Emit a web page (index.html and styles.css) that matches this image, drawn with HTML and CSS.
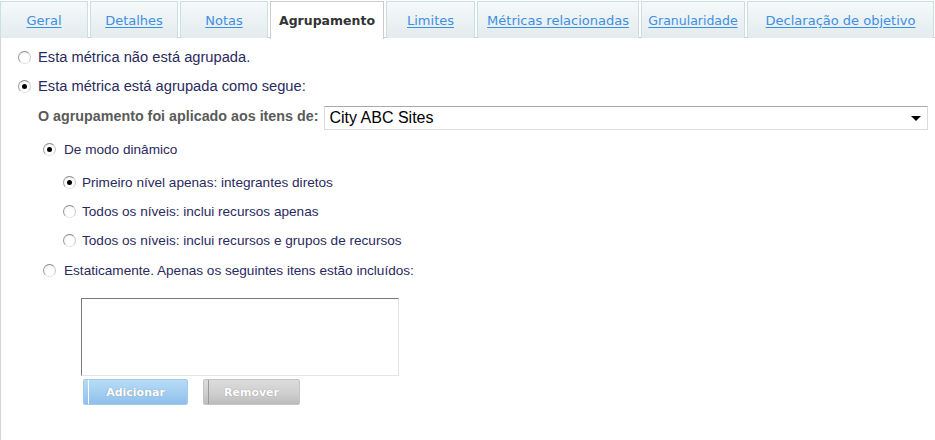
FILE: index.html
```html
<!DOCTYPE html>
<html lang="pt">
<head>
<meta charset="utf-8">
<link rel="stylesheet" href="styles.css">
</head>
<body>
<div class="page">
  <nav class="tabs">
    <a class="tab t-geral">Geral</a>
    <a class="tab t-det">Detalhes</a>
    <a class="tab t-notas">Notas</a>
    <span class="tab active t-agr">Agrupamento</span>
    <a class="tab t-lim">Limites</a>
    <a class="tab t-met">Métricas relacionadas</a>
    <a class="tab t-gran">Granularidade</a>
    <a class="tab last">Declaração de objetivo</a>
  </nav>
  <div class="panel">
    <label class="row top r1"><span class="radio"></span><span class="txt">Esta métrica não está agrupada.</span></label>
    <label class="row top r2"><span class="radio on"></span><span class="txt">Esta métrica está agrupada como segue:</span></label>
    <div class="applied">
      <span class="applied-label">O agrupamento foi aplicado aos itens de:</span>
      <div class="select"><span>City ABC Sites</span><span class="arrow"></span></div>
    </div>
    <label class="row lvl1 dyn"><span class="radio on"></span><span class="txt">De modo dinâmico</span></label>
    <label class="row lvl2 sub1"><span class="radio on"></span><span class="txt">Primeiro nível apenas: integrantes diretos</span></label>
    <label class="row lvl2 sub"><span class="radio"></span><span class="txt">Todos os níveis: inclui recursos apenas</span></label>
    <label class="row lvl2 sub"><span class="radio"></span><span class="txt">Todos os níveis: inclui recursos e grupos de recursos</span></label>
    <label class="row lvl1 stat"><span class="radio"></span><span class="txt">Estaticamente. Apenas os seguintes itens estão incluídos:</span></label>
    <div class="listbox"></div>
    <div class="buttons">
      <button class="btn add">Adicionar</button>
      <button class="btn remove">Remover</button>
    </div>
  </div>
</div>
</body>
</html>
```

FILE: styles.css
```css
* { box-sizing: border-box; }
html, body { margin: 0; padding: 0; background: #fff; }
body { width: 935px; height: 440px; overflow: hidden; font-family: "Liberation Sans", Arial, sans-serif; }
.page { display: flex; flex-direction: column; height: 440px; }

.tabs {
  display: flex;
  gap: 2px;
  padding: 1px 1px 0 0;
  height: 38px;
  border-bottom: 1px solid #cccccc;
}
.tab {
  width: 88px;
  flex: none;
  height: 37px;
  padding: 0 4px;
  display: flex;
  align-items: center;
  justify-content: center;
  border: 1px solid #cadfe0;
  border-bottom: none;
  background: linear-gradient(#f5f9fa, #e3ebee);
  font-family: "DejaVu Sans", Verdana, sans-serif;
  font-size: 13px;
  color: #3d8fe3;
  text-decoration: underline;
  text-underline-offset: 2px;
  white-space: nowrap;
}
.t-agr { width: 114px; }
.t-lim { width: 89px; }
.t-met { width: 162px; }
.t-gran { width: 104px; font-size: 12.5px; }
.tab.last { flex: 1; }
.tab.active {
  background: #fff;
  color: #333;
  font-weight: bold;
  font-size: 12.5px;
  text-decoration: none;
  height: 38px;
  border-color: #cccccc;
  position: relative;
  z-index: 1;
}

.panel {
  flex: 1;
  border-left: 1px solid #d4d4d4;
  display: flex;
  flex-direction: column;
  padding-top: 9px;
  font-size: 13.6px;
  color: #2a2a5e;
}
.row {
  display: flex;
  align-items: center;
  height: 20px;
}
.top { font-size: 14.7px; }
.r1 { padding-left: 17px; }
.r2 { padding-left: 17px; margin-top: 9px; }
.txt { margin-left: 7px; }
.lvl1 { padding-left: 42px; }
.lvl1 .txt { margin-left: 8px; }
.lvl2 { padding-left: 62px; }
.lvl2 .txt { margin-left: 6px; }
.dyn { margin-top: 9px; }
.sub1 { margin-top: 13px; }
.sub { margin-top: 9px; }
.stat { margin-top: 10px; }

.radio {
  width: 13px;
  height: 13px;
  border-radius: 50%;
  border: 1px solid;
  border-color: #8a8a8a #c8c8c8 #e2e2e2 #9a9a9a;
  background: radial-gradient(circle at 60% 65%, #ffffff 40%, #eeeeee 100%);
  display: flex;
  align-items: center;
  justify-content: center;
  flex: none;
}
.radio.on::after {
  content: "";
  width: 5px;
  height: 5px;
  border-radius: 50%;
  background: #000;
}

.applied {
  display: flex;
  align-items: center;
  margin-top: 10px;
  padding-left: 37px;
  padding-right: 7px;
  height: 24px;
}
.applied-label {
  font-weight: bold;
  color: #5a5a5a;
  font-size: 14.3px;
  margin-top: -4px;
  white-space: nowrap;
}
.select {
  margin-left: 6px;
  flex: 1;
  height: 24px;
  border: 1px solid #dcdcdc;
  border-top-color: #a8a8a8;
  display: flex;
  align-items: center;
  justify-content: space-between;
  padding: 0 6px 0 4px;
  font-size: 16px;
  color: #000;
}
.arrow {
  width: 0;
  height: 0;
  border-left: 5px solid transparent;
  border-right: 5px solid transparent;
  border-top: 5px solid #000;
}

.listbox {
  margin: 18px 0 0 80px;
  width: 318px;
  height: 78px;
  border: 1px solid;
  border-color: #7a7a7a #e4e4e4 #e4e4e4 #7a7a7a;
}
.buttons {
  display: flex;
  gap: 15px;
  margin: 3px 0 0 82px;
}
.btn {
  position: relative;
  height: 26px;
  border-radius: 2px;
  font-family: "DejaVu Sans", Verdana, sans-serif;
  font-size: 11px;
  font-weight: bold;
  color: #fff;
  padding: 0;
  text-shadow: 0 0 1px rgba(110,110,110,0.7);
}
.btn::before {
  content: "";
  position: absolute;
  left: 4px;
  top: 0;
  bottom: 0;
  width: 1px;
}
.add {
  width: 105px;
  border: 1px solid #a4cbec;
  background: linear-gradient(#b6dbf6, #a2cdf1 55%, #8dbfec);
}
.add::before { background: #ffffff; }
.remove {
  width: 97px;
  border: 1px solid #c4c4c4;
  background: linear-gradient(#dcdcdc, #cfcfcf 55%, #bcbcbc);
}
.remove::before { background: #9a9a9a; }
```
